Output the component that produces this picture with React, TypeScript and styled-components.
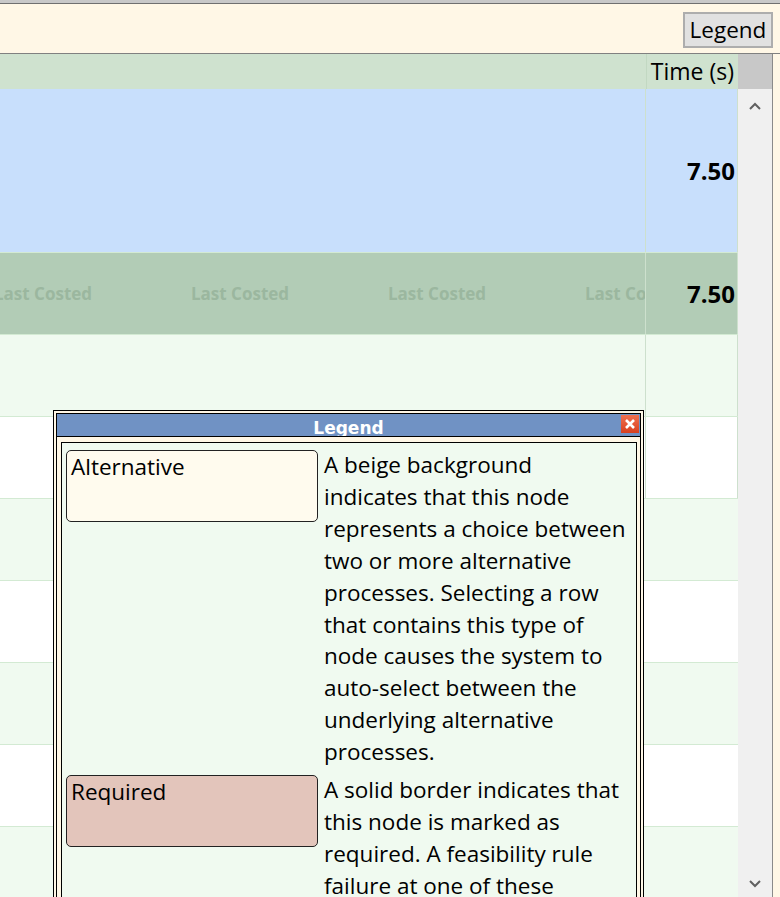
import React from "react";
import styled, { createGlobalStyle } from "styled-components";

const Global = createGlobalStyle`
  html, body { margin: 0; padding: 0; }
  body {
    background: #fff7e6;
    font-family: "Open Sans", "Noto Sans", "DejaVu Sans", sans-serif;
    overflow: hidden;
  }
`;

const Page = styled.div`
  position: relative;
  width: 780px;
  height: 897px;
  overflow: hidden;
  display: flex;
  flex-direction: column;
`;

const TopStrip = styled.div`
  flex: none;
  height: 3px;
  background: #c8c8c8;
  border-bottom: 1px solid #6f6f6f;
`;

const Toolbar = styled.div`
  flex: none;
  height: 49px;
  background: #fff7e6;
  border-bottom: 1px solid #808080;
  display: flex;
  justify-content: flex-end;
  align-items: center;
  padding-right: 7px;
`;

const ToolButton = styled.button`
  width: 90px;
  height: 36px;
  margin-top: 3px;
  background: #e1e1e1;
  border: 2px solid #adadad;
  font-family: "Open Sans", "Noto Sans", sans-serif;
  font-size: 22.5px;
  color: #000;
  padding: 0;
  line-height: 30px;
`;

const Main = styled.div`
  flex: 1;
  display: flex;
  min-height: 0;
`;

const GridPanel = styled.div`
  width: 772px;
  border-right: 1px solid #8a8a8a;
  display: flex;
  flex-direction: column;
`;

const HeaderRow = styled.div`
  flex: none;
  height: 35px;
  display: flex;
  background: #cfe2cf;
`;

const HeaderFill = styled.div`
  flex: 1;
`;

const TimeHeader = styled.div`
  width: 92px;
  border-left: 1px solid #c2d8c2;
  font-size: 23px;
  text-align: right;
  padding-right: 4px;
  line-height: 35px;
  box-sizing: border-box;
  color: #000;
  white-space: nowrap;
`;

const ScrollCorner = styled.div`
  width: 34px;
  background: #c8c8c8;
`;

const Body = styled.div`
  flex: 1;
  display: flex;
  min-height: 0;
`;

const Rows = styled.div`
  width: 738px;
  display: flex;
  flex-direction: column;
  overflow: hidden;
`;

const DataRow = styled.div<{ $bg: string; $h: number }>`
  flex: none;
  height: ${(p) => p.$h}px;
  background: ${(p) => p.$bg};
  border-bottom: 1px solid #d3ead3;
  display: flex;
  box-sizing: border-box;
`;

const MainCell = styled.div`
  flex: 1;
  display: flex;
  align-items: center;
  overflow: hidden;
  min-width: 0;
`;

const GhostTrack = styled.div`
  display: flex;
  margin-left: -6px;
  white-space: nowrap;
`;

const Ghost = styled.span`
  flex: none;
  width: 197px;
  font-size: 17px;
  font-weight: 700;
  color: #9bb79f;
`;

const TimeCell = styled.div<{ $edge: boolean }>`
  width: 93px;
  box-sizing: border-box;
  border-left: 1px solid ${(p) => (p.$edge ? "#cde0cd" : "transparent")};
  border-right: 1px solid ${(p) => (p.$edge ? "#cde0cd" : "transparent")};
  display: flex;
  align-items: center;
  justify-content: flex-end;
  padding-right: 2px;
  font-size: 24px;
  font-weight: 700;
  color: #000;
`;

const ScrollBar = styled.div`
  width: 34px;
  background: #f0f0f0;
  display: flex;
  flex-direction: column;
  justify-content: space-between;
  align-items: center;
  padding: 12px 0 8px;
  box-sizing: border-box;
`;

const Chevron = styled.svg`
  width: 14px;
  height: 10px;
`;

/* Legend popup overlay */
const Popup = styled.div`
  position: absolute;
  left: 53px;
  top: 410px;
  width: 591px;
  height: 520px;
  box-sizing: border-box;
  border: 1px solid #000;
  background: #fff7e6;
  padding: 2px;
`;

const PopupInner = styled.div`
  border: 1px solid #000;
  border-bottom: none;
  height: 100%;
  box-sizing: border-box;
  display: flex;
  flex-direction: column;
`;

const TitleBar = styled.div`
  flex: none;
  position: relative;
  height: 22px;
  background: #7092c4;
  border-bottom: 1px solid #000;
  color: #fff;
  font-family: "DejaVu Sans", sans-serif;
  font-weight: 700;
  font-size: 17px;
  text-align: center;
  line-height: 29px;
  overflow: hidden;
`;

const CloseBtn = styled.div`
  position: absolute;
  right: 1px;
  top: 1px;
  width: 18px;
  height: 18px;
  background: linear-gradient(#f07050, #d8401f);
  display: flex;
  align-items: center;
  justify-content: center;
`;

const ContentWrap = styled.div`
  flex: 1;
  min-height: 0;
  padding: 5px 3px 0 4px;
  display: flex;
  overflow: hidden;
`;

const Content = styled.div`
  flex: 1;
  border: 1px solid #000;
  border-bottom: none;
  background: #f0faf0;
  padding: 7px 4px 0 4px;
  display: flex;
  flex-direction: column;
  gap: 7px;
`;

const Item = styled.div`
  flex: none;
  display: grid;
  grid-template-columns: 252px 1fr;
  column-gap: 6px;
  align-items: start;
`;

const Swatch = styled.div<{ $bg: string }>`
  height: 72px;
  box-sizing: border-box;
  border: 1px solid #222;
  border-radius: 5px;
  background: ${(p) => p.$bg};
  padding: 0 4px;
  font-size: 22.5px;
  line-height: 32px;
  color: #000;
`;

const Desc = styled.div`
  font-size: 22.5px;
  line-height: 31.9px;
  color: #000;
  margin-top: -1px;
  white-space: nowrap;
`;

const DescLine = styled.div``;

const rows = [
  { bg: "#c8dffc", h: 164, time: "7.50", ghost: false, edge: true },
  { bg: "#b2ccb6", h: 82, time: "7.50", ghost: true, edge: true },
  { bg: "#f0faf0", h: 82, time: "", ghost: false, edge: true },
  { bg: "#ffffff", h: 82, time: "", ghost: false, edge: true },
  { bg: "#f0faf0", h: 82, time: "", ghost: false, edge: false },
  { bg: "#ffffff", h: 82, time: "", ghost: false, edge: false },
  { bg: "#f0faf0", h: 82, time: "", ghost: false, edge: false },
  { bg: "#ffffff", h: 82, time: "", ghost: false, edge: false },
  { bg: "#f0faf0", h: 82, time: "", ghost: false, edge: false },
];

const legend = [
  {
    label: "Alternative",
    bg: "#fffbee",
    lines: [
      "A beige background",
      "indicates that this node",
      "represents a choice between",
      "two or more alternative",
      "processes. Selecting a row",
      "that contains this type of",
      "node causes the system to",
      "auto-select between the",
      "underlying alternative",
      "processes.",
    ],
  },
  {
    label: "Required",
    bg: "#e3c5bb",
    lines: [
      "A solid border indicates that",
      "this node is marked as",
      "required. A feasibility rule",
      "failure at one of these",
      "nodes will stop the process.",
    ],
  },
];

export default function App() {
  return (
    <>
      <Global />
      <Page>
        <TopStrip />
        <Toolbar>
          <ToolButton>Legend</ToolButton>
        </Toolbar>
        <Main>
          <GridPanel>
            <HeaderRow>
              <HeaderFill />
              <TimeHeader>Time (s)</TimeHeader>
              <ScrollCorner />
            </HeaderRow>
            <Body>
              <Rows>
                {rows.map((r, i) => (
                  <DataRow key={i} $bg={r.bg} $h={r.h}>
                    <MainCell>
                      {r.ghost && (
                        <GhostTrack>
                          <Ghost>Last Costed</Ghost>
                          <Ghost>Last Costed</Ghost>
                          <Ghost>Last Costed</Ghost>
                          <Ghost>Last Costed</Ghost>
                        </GhostTrack>
                      )}
                    </MainCell>
                    <TimeCell $edge={r.edge}>{r.time}</TimeCell>
                  </DataRow>
                ))}
              </Rows>
              <ScrollBar>
                <Chevron viewBox="0 0 14 10">
                  <path d="M2 8 L7 3 L12 8" fill="none" stroke="#606060" strokeWidth="2" />
                </Chevron>
                <Chevron viewBox="0 0 14 10">
                  <path d="M2 2 L7 7 L12 2" fill="none" stroke="#606060" strokeWidth="2" />
                </Chevron>
              </ScrollBar>
            </Body>
          </GridPanel>
        </Main>

        <Popup>
          <PopupInner>
            <TitleBar>
              Legend
              <CloseBtn>
                <svg width="12" height="12" viewBox="0 0 12 12">
                  <path d="M2 2 L10 10 M10 2 L2 10" stroke="#fff" strokeWidth="2.6" />
                </svg>
              </CloseBtn>
            </TitleBar>
            <ContentWrap>
              <Content>
                {legend.map((item) => (
                  <Item key={item.label}>
                    <Swatch $bg={item.bg}>{item.label}</Swatch>
                    <Desc>
                      {item.lines.map((l, i) => (
                        <DescLine key={i}>{l}</DescLine>
                      ))}
                    </Desc>
                  </Item>
                ))}
              </Content>
            </ContentWrap>
          </PopupInner>
        </Popup>
      </Page>
    </>
  );
}
